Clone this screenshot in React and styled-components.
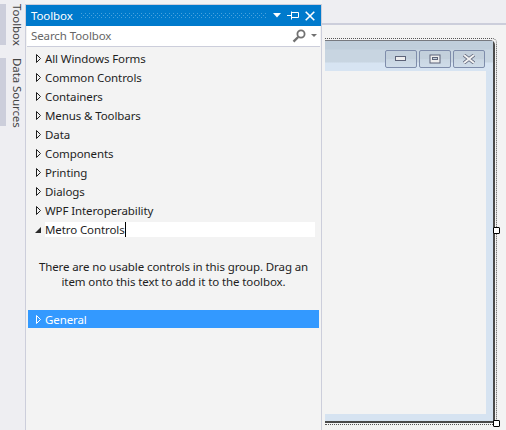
import React from "react";
import styled, { createGlobalStyle } from "styled-components";

const GlobalStyle = createGlobalStyle`
  html, body {
    margin: 0;
    padding: 0;
    background: #f3f3f3;
    overflow: hidden;
  }
  * {
    box-sizing: border-box;
  }
`;

const Page = styled.div`
  display: flex;
  width: 506px;
  height: 430px;
  overflow: hidden;
  font-family: "Noto Sans", "Liberation Sans", sans-serif;
  font-size: 11.5px;
  letter-spacing: -0.1px;
  color: #1e1e1e;
`;

const SideStrip = styled.div`
  flex: 0 0 25px;
  display: flex;
  flex-direction: column;
  gap: 13px;
  padding-top: 4px;
  background: #eeeef2;
`;
const SideTab = styled.div`
  height: ${props => props.$height}px;
  width: 25px;
  border-left: 6px solid #cccedb;
  padding-left: 3px;
  writing-mode: vertical-rl;
  line-height: 16px;
  color: #444;
  white-space: nowrap;
`;

const Panel = styled.div`
  flex: 0 0 297px;
  display: flex;
  flex-direction: column;
  background: #f3f3f3;
  border-left: 1px solid #cccedb;
  border-right: 1px solid #cccedb;
  border-top: 1px solid #cccedb;
  margin-top: 4px;
`;
const TitleBar = styled.div`
  flex: 0 0 21px;
  display: flex;
  align-items: center;
  padding: 0 6px 0 5px;
  background: #007acc;
  color: #fff;
`;
const Grip = styled.div`
  flex: 1;
  height: 5px;
  margin: 0 6px 0 8px;
  background:
    radial-gradient(circle at 0.5px 0.5px, #4ba3dd 0.7px, transparent 0.8px) 0 0 / 4px 4px,
    radial-gradient(circle at 0.5px 0.5px, #4ba3dd 0.7px, transparent 0.8px) 2px 2px / 4px 4px;
`;
const TitleIcons = styled.div`
  display: flex;
  align-items: center;
  gap: 6px;
`;
const SearchBox = styled.div`
  flex: 0 0 21px;
  display: flex;
  align-items: center;
  padding: 0 3px 1px 4px;
  background: #fff;
  border-bottom: 1px solid #cccedb;
  margin: 0 1px;
  color: #666;
`;
const SearchText = styled.span`
  flex: 1;
`;
const SearchCaret = styled.svg`
  margin-left: 5px;
`;
const Tree = styled.div`
  display: flex;
  flex-direction: column;
  padding: 2px 2px 0;
`;
const Row = styled.div`
  display: flex;
  align-items: center;
  height: ${props => (props.$selected ? "18px" : "19px")};
  padding-left: 7px;
  margin-right: ${props => (props.$selected ? "0" : "4px")};
  background: ${props => (props.$selected ? "#3399ff" : "transparent")};
  color: ${props => (props.$selected ? "#fff" : "#1e1e1e")};
`;
const Arrow = styled.svg`
  flex: 0 0 7px;
  height: 9px;
  margin-right: 3px;
`;
const RowLabel = styled.span`
  flex: ${props => (props.$editing ? "1" : "0 1 auto")};
  height: 15px;
  line-height: 15px;
  background: ${props => (props.$editing ? "#fff" : "transparent")};
  white-space: nowrap;
`;
const Caret = styled.span`
  display: inline-block;
  width: 1px;
  height: 15px;
  background: #000;
  vertical-align: top;
`;
const EmptyMessage = styled.div`
  height: 71px;
  padding-top: 20px;
  line-height: 15px;
  text-align: center;
`;

const Doc = styled.div`
  flex: 1;
  display: flex;
  flex-direction: column;
  min-width: 0;
`;
const TabWell = styled.div`
  flex: 0 0 25px;
  background: #eeeef2;
  border-bottom: 2px solid #cccedb;
`;
const Surface = styled.div`
  flex: 1;
  padding: 13px 9px 0 3px;
  background: #f3f3f3;
`;
const Selection = styled.div`
  position: relative;
  height: 387px;
  padding: 1px 1px 1px 0;
  border: 1px dotted #555;
  border-left: none;
  border-top-right-radius: 5px;
`;
const Handle = styled.div`
  position: absolute;
  width: 7px;
  height: 7px;
  right: -4px;
  top: ${props => props.$top};
  background: #fff;
  border: 1px solid #000;
  border-radius: 1px;
`;
const FormWindow = styled.div`
  display: flex;
  flex-direction: column;
  height: 100%;
  background: #d6e3f1;
  border-top: 1px solid #77797f;
  border-right: 2px solid #4a4a4a;
  border-bottom: 2px solid #4a4a4a;
  border-top-right-radius: 5px;
`;
const FormTitle = styled.div`
  flex: 0 0 30px;
  display: flex;
  justify-content: flex-end;
  gap: 2px;
  padding: 9px 8px 0 0;
  background: linear-gradient(#c0cedb 0, #c0cedb 8px, #c8d5e1 9px, #c8d5e1 21px, #d7e4f2 22px);
`;
const WinButton = styled.div`
  width: 32px;
  height: 18px;
  display: flex;
  align-items: center;
  justify-content: center;
  border: 1px solid #7f8dab;
  border-radius: 2px;
  background: linear-gradient(#c3d0dc 0, #c3d0dc 50%, #c9d6e2 50%, #cfdce9 100%);
`;
const Client = styled.div`
  flex: 1;
  margin: 0 7px 7px 0;
  background: #f3f3f3;
`;

const ClosedArrow = ({ color = "#1e1e1e" }) => (
  <Arrow viewBox="0 0 7 9">
    <path d="M1.5 0.5 L5.5 4.5 L1.5 8.5 Z" fill="none" stroke={color} />
  </Arrow>
);
const OpenArrow = () => (
  <Arrow viewBox="0 0 7 9">
    <path d="M0 8 L6 8 L6 2 Z" fill="#2a2a2a" />
  </Arrow>
);

const groups = [
  "All Windows Forms",
  "Common Controls",
  "Containers",
  "Menus & Toolbars",
  "Data",
  "Components",
  "Printing",
  "Dialogs",
  "WPF Interoperability",
];

export default function App() {
  return (
    <Page>
      <GlobalStyle />
      <SideStrip>
        <SideTab $height={41}>Toolbox</SideTab>
        <SideTab $height={68}>Data Sources</SideTab>
      </SideStrip>
      <Panel>
        <TitleBar>
          Toolbox
          <Grip />
          <TitleIcons>
            <svg width="8" height="5" viewBox="0 0 8 5">
              <path d="M0 0 H8 L4 4.5 Z" fill="#fff" />
            </svg>
            <svg width="12" height="9" viewBox="0 0 12 9">
              <path d="M0 4.5 H4 M4.5 .5 V8.5 M4.5 1.5 H11.5 V6.5 H4.5" fill="none" stroke="#fff" />
            </svg>
            <svg width="10" height="10" viewBox="0 0 10 10">
              <path d="M.7 .7 L9.3 9.3 M9.3 .7 L.7 9.3" stroke="#fff" strokeWidth="1.6" />
            </svg>
          </TitleIcons>
        </TitleBar>
        <SearchBox>
          <SearchText>Search Toolbox</SearchText>
          <svg width="14" height="14" viewBox="0 0 14 14">
            <circle cx="9" cy="5" r="3.6" fill="none" stroke="#717171" strokeWidth="1.8" />
            <path d="M6.2 8 L1.5 12.6" stroke="#717171" strokeWidth="2.4" />
          </svg>
          <SearchCaret width="6" height="3" viewBox="0 0 6 3">
            <path d="M0 0 H6 L3 3 Z" fill="#717171" />
          </SearchCaret>
        </SearchBox>
        <Tree>
          {groups.map(name => (
            <Row key={name}>
              <ClosedArrow />
              <RowLabel>{name}</RowLabel>
            </Row>
          ))}
          <Row>
            <OpenArrow />
            <RowLabel $editing>
              Metro Controls
              <Caret />
            </RowLabel>
          </Row>
          <EmptyMessage>
            There are no usable controls in this group. Drag an
            <br />
            item onto this text to add it to the toolbox.
          </EmptyMessage>
          <Row $selected>
            <ClosedArrow color="#fff" />
            <RowLabel>General</RowLabel>
          </Row>
        </Tree>
      </Panel>
      <Doc>
        <TabWell />
        <Surface>
          <Selection>
            <FormWindow>
              <FormTitle>
                <WinButton>
                  <svg width="12" height="6" viewBox="0 0 12 6">
                    <rect x=".5" y=".5" width="10" height="4" fill="#eee" stroke="#5d6378" />
                  </svg>
                </WinButton>
                <WinButton>
                  <svg width="12" height="10" viewBox="0 0 12 10">
                    <rect x="1" y="1" width="10" height="8" fill="#eee" stroke="#5d6378" />
                    <rect x="3.5" y="3.5" width="5" height="2" fill="#c3d0dc" stroke="#5d6378" />
                  </svg>
                </WinButton>
                <WinButton>
                  <svg width="12" height="10" viewBox="0 0 12 10">
                    <path d="M1 1 L11 9 M11 1 L1 9" stroke="#5d6378" strokeWidth="3.4" />
                    <path d="M1 1 L11 9 M11 1 L1 9" stroke="#f2f2f2" strokeWidth="2" />
                  </svg>
                </WinButton>
              </FormTitle>
              <Client />
            </FormWindow>
            <Handle $top="188px" />
            <Handle $top="381px" />
          </Selection>
        </Surface>
      </Doc>
    </Page>
  );
}
